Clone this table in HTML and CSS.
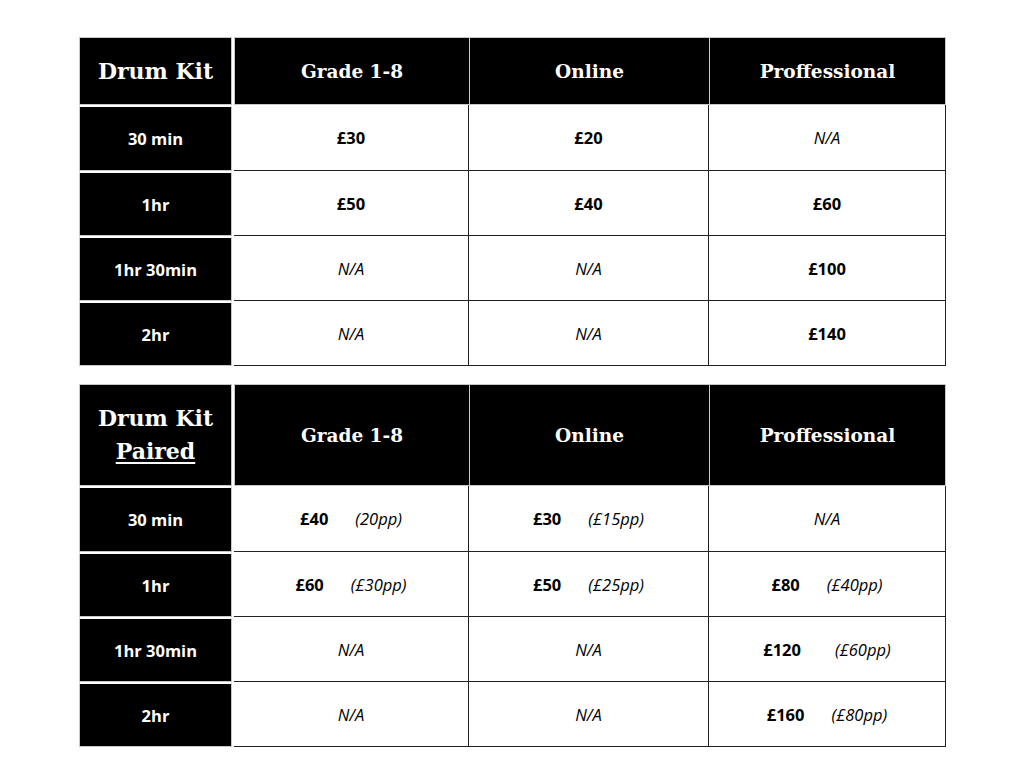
FILE: index.html
```html
<!DOCTYPE html>
<html>
<head>
<meta charset="utf-8">
<link rel="stylesheet" href="styles.css">
</head>
<body>
<div class="page">
  <div class="grid">
    <div class="hcell corner"><span>Drum Kit</span></div>
    <div class="hcell">Grade 1-8</div>
    <div class="hcell">Online</div>
    <div class="hcell last">Proffessional</div>

    <div class="rcell">30 min</div>
    <div class="dcell"><b>£30</b></div>
    <div class="dcell"><b>£20</b></div>
    <div class="dcell"><i>N/A</i></div>

    <div class="rcell">1hr</div>
    <div class="dcell"><b>£50</b></div>
    <div class="dcell"><b>£40</b></div>
    <div class="dcell"><b>£60</b></div>

    <div class="rcell">1hr 30min</div>
    <div class="dcell"><i>N/A</i></div>
    <div class="dcell"><i>N/A</i></div>
    <div class="dcell"><b>£100</b></div>

    <div class="rcell">2hr</div>
    <div class="dcell"><i>N/A</i></div>
    <div class="dcell"><i>N/A</i></div>
    <div class="dcell"><b>£140</b></div>
  </div>

  <div class="grid paired">
    <div class="hcell corner"><span>Drum Kit<br><u>Paired</u></span></div>
    <div class="hcell">Grade 1-8</div>
    <div class="hcell">Online</div>
    <div class="hcell last">Proffessional</div>

    <div class="rcell">30 min</div>
    <div class="dcell"><b>£40</b><i class="pp">(20pp)</i></div>
    <div class="dcell"><b>£30</b><i class="pp">(£15pp)</i></div>
    <div class="dcell"><i>N/A</i></div>

    <div class="rcell">1hr</div>
    <div class="dcell"><b>£60</b><i class="pp">(£30pp)</i></div>
    <div class="dcell"><b>£50</b><i class="pp">(£25pp)</i></div>
    <div class="dcell"><b>£80</b><i class="pp">(£40pp)</i></div>

    <div class="rcell">1hr 30min</div>
    <div class="dcell"><i>N/A</i></div>
    <div class="dcell"><i>N/A</i></div>
    <div class="dcell"><b>£120</b><i class="pp wide">(£60pp)</i></div>

    <div class="rcell">2hr</div>
    <div class="dcell"><i>N/A</i></div>
    <div class="dcell"><i>N/A</i></div>
    <div class="dcell"><b>£160</b><i class="pp">(£80pp)</i></div>
  </div>
</div>
</body>
</html>
```

FILE: styles.css
```css
html, body {
  margin: 0;
  padding: 0;
  background: #fff;
}

.page {
  padding: 37px 0 0 79px;
  display: flex;
  flex-direction: column;
  gap: 18px;
}

.grid {
  display: grid;
  grid-template-columns: 155px 235px 240px 237px;
  grid-template-rows: 68px 66px repeat(3, 65px);
  width: 867px;
}

.grid.paired {
  grid-template-rows: 102px 66px 65px 65px 65px;
}

.hcell {
  background: #000;
  color: #fff;
  font-family: "DejaVu Serif", Georgia, serif;
  font-weight: bold;
  font-size: 18.5px;
  display: flex;
  align-items: center;
  justify-content: center;
  border-left: 1px solid #c8c8c8;
  border-top: 1px solid #c8c8c8;
  border-bottom: 1px solid #c8c8c8;
  box-sizing: border-box;
}

.hcell.last {
  border-right: 1px solid #c8c8c8;
}

.hcell.corner {
  font-size: 22px;
  line-height: 33px;
  text-align: center;
  border: 1px solid #c8c8c8;
  margin-right: 2px;
}

.hcell.corner u {
  text-decoration-thickness: 2px;
  text-underline-offset: 3px;
}

.rcell {
  background: #000;
  color: #fff;
  font-family: "Open Sans", "Noto Sans", sans-serif;
  font-weight: bold;
  font-size: 16.5px;
  display: flex;
  align-items: center;
  justify-content: center;
  border: 1px solid #c8c8c8;
  border-top: 2px solid #fff;
  margin-right: 2px;
  box-sizing: border-box;
}

.dcell {
  background: #fff;
  color: #000;
  font-family: "Open Sans", "Noto Sans", sans-serif;
  font-size: 16.5px;
  display: flex;
  align-items: center;
  justify-content: center;
  border-right: 1px solid #222;
  border-bottom: 1px solid #222;
  box-sizing: border-box;
}

.dcell b {
  font-weight: bold;
}

.dcell i {
  font-style: italic;
}

.pp {
  margin-left: 27px;
}

.pp.wide {
  margin-left: 34px;
}
```
